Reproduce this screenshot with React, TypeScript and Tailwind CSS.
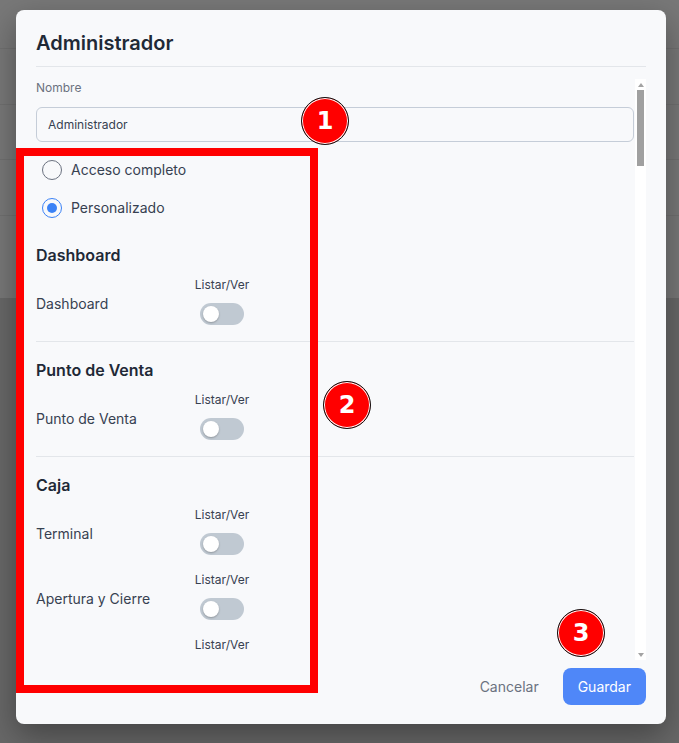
import React, { useState } from 'react';

type Perm = { label: string; on: boolean };
type Section = { title: string; rows: Perm[] };

const sections: Section[] = [
  { title: 'Dashboard', rows: [{ label: 'Dashboard', on: false }] },
  { title: 'Punto de Venta', rows: [{ label: 'Punto de Venta', on: false }] },
  {
    title: 'Caja',
    rows: [
      { label: 'Terminal', on: false },
      { label: 'Apertura y Cierre', on: false },
      { label: 'Movimientos de Caja', on: false },
    ],
  },
];

// little toggle switch
const Toggle = ({ on }: { on: boolean }) => (
  <div
    className={`w-[44px] h-[22px] rounded-full p-[3px] flex items-center ${
      on ? 'bg-[#4f87f8] justify-end' : 'bg-[#c0c9d2] justify-start'
    }`}
  >
    <div className="w-[16px] h-[16px] rounded-full bg-white shadow-[0_1px_2px_rgba(0,0,0,0.25)]" />
  </div>
);

const Radio = ({ checked, label }: { checked: boolean; label: string }) => (
  <label className="flex items-center gap-[9px] h-[20px] pl-[6px]">
    <span
      className={`w-[20px] h-[20px] rounded-full border-[1.5px] flex items-center justify-center ${
        checked ? 'border-[#3b82f6]' : 'border-[#6b7280]'
      }`}
    >
      {checked && <span className="w-[10px] h-[10px] rounded-full bg-[#3b82f6]" />}
    </span>
    <span className="text-[14px] leading-5 text-[#374151]">{label}</span>
  </label>
);

// numbered red marker used by the annotations
const Badge = ({ n, className }: { n: number; className: string }) => (
  <div
    className={`absolute w-[48px] h-[48px] rounded-full bg-[#ff0000] border-[1.5px] border-[#111] shadow-[inset_0_0_0_1px_#fff] flex items-center justify-center ${className}`}
  >
    <span className="text-white font-bold text-[24px] leading-none font-['DejaVu_Sans',sans-serif]">{n}</span>
  </div>
);

export default function App() {
  const [mode] = useState<'full' | 'custom'>('custom');

  return (
    <div className="relative w-[679px] h-[743px] overflow-hidden bg-[#686868] font-['Inter',sans-serif]">
      {/* page behind the overlay */}
      <div className="h-[298px] bg-[#787878] flex flex-col">
        <div className="h-[49px] border-b border-[#707070]" />
        <div className="h-[56px] border-b border-[#707070]" />
        <div className="h-[55px] border-b border-[#707070]" />
        <div className="h-[56px] border-b border-[#707070]" />
      </div>

      {/* modal */}
      <div className="absolute left-4 top-[10px] w-[650px] h-[714px] rounded-lg bg-[#f8f9fb] shadow-[0_12px_32px_rgba(0,0,0,0.35)] flex flex-col px-5">
        <div className="pt-[19px] pb-[9px] border-b border-[#e3e6ea]">
          <h2 className="text-[20px] leading-7 font-semibold text-[#1f2937]">Administrador</h2>
        </div>

        <div className="mt-3 h-[581px] flex">
          <div className="flex-1 h-[579px] overflow-hidden">
            <div className="pt-px text-[12px] leading-4 text-[#6b7280]">Nombre</div>
            <div className="mt-[11px] h-[35px] rounded-md border border-[#c5cdd8] bg-[#f8f9fb] px-[11px] flex items-center text-[12px] text-[#374151]">
              Administrador
            </div>

            <div className="mt-[18px] flex flex-col gap-[18px]">
              <Radio checked={mode === 'full'} label="Acceso completo" />
              <Radio checked={mode === 'custom'} label="Personalizado" />
            </div>

            {sections.map((s, i) => (
              <div
                key={s.title}
                className={`${i === 0 ? 'pt-[25px]' : 'pt-4'} pb-4 border-b border-[#e3e6ea]`}
              >
                <h3 className="text-[16px] leading-6 font-semibold text-[#1f2937]">{s.title}</h3>
                <div className="mt-[10px] flex flex-col gap-[17px]">
                  {s.rows.map((r) => (
                    <div key={r.label} className="flex items-center">
                      <div className="w-[159px] pt-[6px] text-[14px] leading-5 text-[#374151]">{r.label}</div>
                      <div className="w-[54px] flex flex-col items-center gap-[10px]">
                        <span className="text-[12px] leading-4 text-[#374151] whitespace-nowrap">Listar/Ver</span>
                        <Toggle on={r.on} />
                      </div>
                    </div>
                  ))}
                </div>
              </div>
            ))}
          </div>

          {/* scrollbar */}
          <div className="ml-px w-[11px] bg-white flex flex-col items-center">
            <div className="h-[11px] flex items-center justify-center">
              <div className="w-0 h-0 border-l-[3px] border-r-[3px] border-b-[4px] border-l-transparent border-r-transparent border-b-[#a3a3a3]" />
            </div>
            <div className="w-[7px] h-[76px] bg-[#a0a0a0]" />
            <div className="flex-1" />
            <div className="h-[11px] flex items-center justify-center">
              <div className="w-0 h-0 border-l-[3px] border-r-[3px] border-t-[4px] border-l-transparent border-r-transparent border-t-[#a3a3a3]" />
            </div>
          </div>
        </div>

        <div className="pt-2 flex justify-end items-center gap-3">
          <button className="px-3 h-[37px] text-[14px] text-[#6b7280]">Cancelar</button>
          <button className="px-[15px] h-[37px] rounded-lg bg-[#4f87f8] text-[14px] text-white">Guardar</button>
        </div>
      </div>

      {/* annotations */}
      <div className="absolute left-4 top-[148px] w-[302px] h-[545px] border-8 border-[#ff0000]" />
      <Badge n={1} className="left-[301px] top-[97px]" />
      <Badge n={2} className="left-[323px] top-[381px]" />
      <Badge n={3} className="left-[557px] top-[609px]" />
    </div>
  );
}
